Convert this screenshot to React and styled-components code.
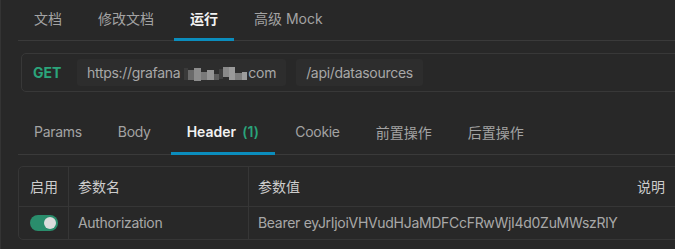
import React, { useState } from 'react'
import styled, { createGlobalStyle } from 'styled-components'

const GlobalStyle = createGlobalStyle`
  html, body {
    margin: 0;
    padding: 0;
    background: #282828;
    overflow: hidden;
  }
  body {
    font-family: Inter, "Noto Sans CJK SC", sans-serif;
    font-size: 14px;
    letter-spacing: -0.3px;
    color: #a6a6a6;
  }
`

const Page = styled.div`
  height: 249px;
  border-left: 1px solid #343434;
  padding-left: 17px;
  overflow: hidden;
`

const TabBar = styled.div`
  display: flex;
  gap: 4px;
  height: 41px;
  box-sizing: border-box;
  border-bottom: 1px solid #3a3a3a;
  margin-top: ${(p) => p.top || 0}px;
`

const Tab = styled.div`
  height: 41px;
  box-sizing: border-box;
  margin-bottom: -1px;
  padding: 0 16px 3px;
  display: flex;
  align-items: center;
  border-bottom: 3px solid ${(p) => (p.active ? '#0b8dbd' : 'transparent')};
  color: ${(p) => (p.active ? '#f2f2f2' : '#a3a3a3')};
  font-weight: ${(p) => (p.active ? 600 : 400)};
  letter-spacing: ${(p) => (p.cjk || p.active ? 0 : -0.3)}px;
  white-space: nowrap;
`

const Count = styled.span`
  color: #2aa57b;
  margin-left: 6px;
  letter-spacing: 0.2px;
`

const UrlBox = styled.div`
  margin: 12px -20px 0 3px;
  height: 39px;
  box-sizing: border-box;
  border: 1px solid #383838;
  border-radius: 5px;
  display: flex;
  align-items: center;
  padding-left: 11px;
  gap: 10px;
`

const Method = styled.span`
  color: #2ba57b;
  font-weight: 700;
  letter-spacing: 0;
  width: 34px;
`

const Segment = styled.div`
  height: 27px;
  display: flex;
  align-items: center;
  padding: 0 10px;
  background: #2d2d2d;
  border-radius: 3px;
  color: #a8a8a8;
`

const Mosaic = styled.span`
  display: inline-flex;
  align-items: center;
  margin: 0 1px 0 4px;
`

const Pix = styled.span`
  display: inline-block;
  width: ${(p) => p.w}px;
  height: ${(p) => p.h}px;
  margin-top: ${(p) => p.dy}px;
  background: ${(p) => p.c};
`

const Table = styled.div`
  margin: 11px -20px 0 0;
  border: 1px solid #363636;
  border-radius: 5px;
`

const Row = styled.div`
  display: grid;
  grid-template-columns: 49px 180px 1fr;
  height: ${(p) => p.h}px;
  border-bottom: ${(p) => (p.last ? 'none' : '1px solid #363636')};
`

const Cell = styled.div`
  display: flex;
  align-items: center;
  justify-content: ${(p) => (p.spread ? 'space-between' : 'flex-start')};
  padding: 0 ${(p) => (p.spread ? 29 : 9)}px 1px ${(p) => p.pl || 9}px;
  border-left: ${(p) => (p.first ? 'none' : '1px solid #363636')};
  color: ${(p) => (p.head ? '#cdcdcd' : '#a8a8a8')};
  letter-spacing: ${(p) => (p.head ? 0 : -0.3)}px;
  white-space: nowrap;
  overflow: hidden;
`

const Switch = styled.div`
  width: 28px;
  height: 16px;
  border-radius: 8px;
  background: ${(p) => (p.on ? '#2a8d6c' : '#555')};
  display: flex;
  align-items: center;
  justify-content: ${(p) => (p.on ? 'flex-end' : 'flex-start')};
  padding: 0 2px;
  box-sizing: border-box;
  cursor: pointer;
`

const Knob = styled.div`
  width: 12px;
  height: 12px;
  border-radius: 50%;
  background: #dcdcdc;
`

const topTabs = ['文档', '修改文档', '运行', '高级 Mock']
const subTabs = ['Params', 'Body', 'Header', 'Cookie', '前置操作', '后置操作']
const isCjk = (t) => /[\u4e00-\u9fff]/.test(t)

const pixels = [
  { w: 4, h: 12, dy: 2, c: '#3a3a3a' },
  { w: 6, h: 10, dy: 4, c: '#6a6a6a' },
  { w: 7, h: 13, dy: 3, c: '#8c8c8c' },
  { w: 6, h: 8, dy: 6, c: '#7a7a7a' },
  { w: 7, h: 10, dy: 4, c: '#959595' },
  { w: 5, h: 6, dy: 8, c: '#5c5c5c' },
  { w: 4, h: 10, dy: 2, c: '#3f3f3f' },
  { w: 6, h: 10, dy: -2, c: '#8a8a8a' },
  { w: 6, h: 13, dy: 2, c: '#9a9a9a' },
  { w: 7, h: 7, dy: 8, c: '#7d7d7d' },
  { w: 5, h: 8, dy: 6, c: '#9c9c9c' },
]

const App = () => {
  const [enabled, setEnabled] = useState(true)

  return (
    <>
      <GlobalStyle />
      <Page>
        <TabBar>
          {topTabs.map((t) => (
            <Tab key={t} active={t === '运行'} cjk={isCjk(t)}>{t}</Tab>
          ))}
        </TabBar>

        <UrlBox>
          <Method>GET</Method>
          <Segment>
            https://grafana
            <Mosaic>
              {pixels.map((p, i) => (
                <Pix key={i} {...p} />
              ))}
            </Mosaic>
            com
          </Segment>
          <Segment>/api/datasources</Segment>
        </UrlBox>

        <TabBar top={22}>
          {subTabs.map((t) => (
            <Tab key={t} active={t === 'Header'} cjk={isCjk(t)}>
              {t}
              {t === 'Header' && <Count>(1)</Count>}
            </Tab>
          ))}
        </TabBar>

        <Table>
          <Row h={39}>
            <Cell first head pl={11}>启用</Cell>
            <Cell head>参数名</Cell>
            <Cell head spread>
              <span>参数值</span>
              <span>说明</span>
            </Cell>
          </Row>
          <Row h={32} last>
            <Cell first pl={11}>
              <Switch on={enabled} onClick={() => setEnabled(!enabled)}>
                <Knob />
              </Switch>
            </Cell>
            <Cell>Authorization</Cell>
            <Cell>Bearer eyJrIjoiVHVudHJaMDFCcFRwWjI4d0ZuMWszRlY</Cell>
          </Row>
        </Table>
      </Page>
    </>
  )
}

export default App
